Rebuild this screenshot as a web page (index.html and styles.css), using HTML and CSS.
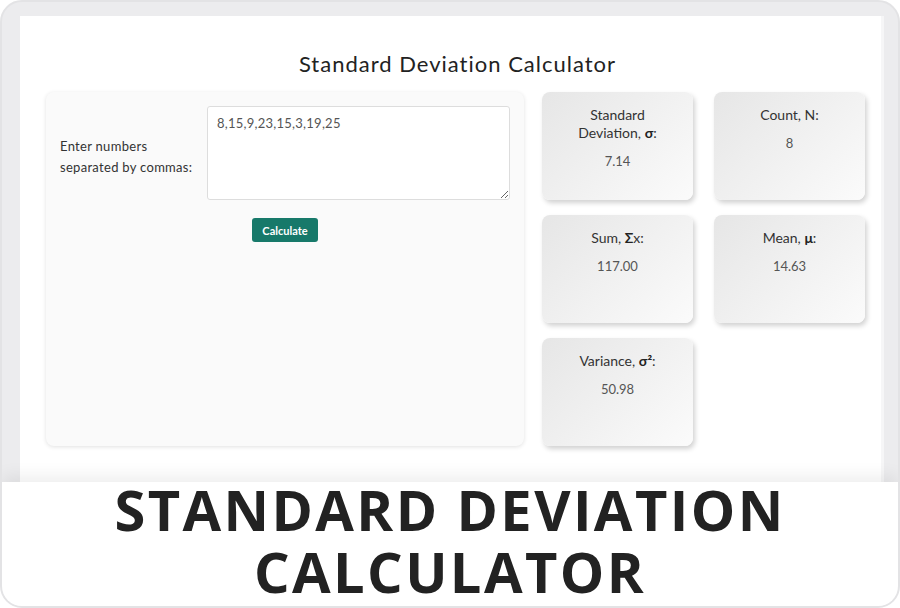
FILE: index.html
```html
<!DOCTYPE html>
<html lang="en">
<head>
    <meta charset="UTF-8">
    <meta name="viewport" content="width=device-width, initial-scale=1.0">
    <title>Standard Deviation Calculator</title>
    <link rel="stylesheet" href="styles.css">
</head>
<body>
    <div class="frame">
        <div class="screen-wrap">
            <div class="screen">
                <h1 class="title">Standard Deviation Calculator</h1>

                <div class="layout">
                    <div class="input-panel">
                        <div class="input-row">
                            <label for="numbers">Enter numbers separated by commas:</label>
                            <textarea id="numbers">8,15,9,23,15,3,19,25</textarea>
                        </div>
                        <div class="actions">
                            <button class="btn-calc" id="calculate">Calculate</button>
                        </div>
                    </div>

                    <div class="results">
                        <div class="card">
                            <div class="card-label">Standard Deviation, <b>σ</b>:</div>
                            <div class="card-value" id="stdDev">7.14</div>
                        </div>
                        <div class="card">
                            <div class="card-label">Count, N:</div>
                            <div class="card-value" id="count">8</div>
                        </div>
                        <div class="card">
                            <div class="card-label">Sum, <b>Σ</b>x:</div>
                            <div class="card-value" id="sum">117.00</div>
                        </div>
                        <div class="card">
                            <div class="card-label">Mean, <b>μ</b>:</div>
                            <div class="card-value" id="mean">14.63</div>
                        </div>
                        <div class="card">
                            <div class="card-label">Variance, <b>σ²</b>:</div>
                            <div class="card-value" id="variance">50.98</div>
                        </div>
                    </div>
                </div>
            </div>
        </div>

        <div class="banner">
            <div class="banner-text">STANDARD DEVIATION CALCULATOR</div>
        </div>
    </div>
</body>
</html>
```

FILE: styles.css
```css
body {
    margin: 0;
    background-color: #fff;
    font-family: Lato, "Open Sans", sans-serif;
}

.frame {
    width: 900px;
    height: 608px;
    box-sizing: border-box;
    border: 2px solid #e3e3e5;
    border-radius: 22px;
    background-color: #ececee;
    overflow: hidden;
    display: flex;
    flex-direction: column;
}

.screen-wrap {
    padding: 14px 14px 0 18px;
    flex: 1;
    display: flex;
}

.screen {
    flex: 1;
    background-color: #fff;
    border-right: 3px solid #f6f6f7;
}

.title {
    margin: 34px 0 14px;
    text-align: center;
    font-size: 22px;
    font-weight: 400;
    line-height: 28px;
    letter-spacing: 1px;
    color: #222;
    padding-left: 14px;
}

.layout {
    display: flex;
    gap: 18px;
    padding-left: 26px;
}

/* input side */
.input-panel {
    width: 478px;
    box-sizing: border-box;
    padding: 14px;
    background-color: #fafafa;
    border-radius: 8px;
    box-shadow: 0 1px 4px rgba(0, 0, 0, 0.12);
}

.input-row {
    display: flex;
    align-items: center;
}

.input-row label {
    width: 147px;
    box-sizing: border-box;
    padding: 8px 10px 0 0;
    font-size: 13px;
    line-height: 21px;
    letter-spacing: 0.3px;
    color: #333;
}

.input-row textarea {
    width: 303px;
    height: 94px;
    box-sizing: border-box;
    padding: 8px 9px;
    border: 1px solid #ddd;
    border-radius: 3px;
    font-family: Lato, "Open Sans", sans-serif;
    font-size: 13px;
    letter-spacing: 0.25px;
    color: #555;
    background-color: #fff;
    resize: vertical;
}

.actions {
    text-align: center;
    margin-top: 18px;
}

.btn-calc {
    padding: 0 10px;
    height: 24px;
    border: none;
    border-radius: 3px;
    background-color: #17796a;
    color: #fff;
    font-family: Lato, sans-serif;
    font-size: 11px;
    font-weight: bold;
    cursor: pointer;
}

/* result cards */
.results {
    display: grid;
    grid-template-columns: repeat(2, 151px);
    grid-auto-rows: 108px;
    column-gap: 21px;
    row-gap: 15px;
}

.card {
    border-radius: 8px;
    background: linear-gradient(135deg, #e6e6e6, #fbfbfb);
    box-shadow: 2px 3px 5px rgba(0, 0, 0, 0.18);
    text-align: center;
    padding: 14px 16px 0;
}

.card-label {
    font-size: 14px;
    line-height: 18px;
    color: #333;
}

.card-label b {
    color: #222;
}

.card-value {
    margin-top: 10px;
    font-size: 13px;
    line-height: 18px;
    color: #555;
}

.banner {
    height: 124px;
    background-color: #fff;
    box-shadow: 0 -6px 16px rgba(0, 0, 0, 0.07);
    z-index: 1;
}

.banner-text {
    padding: 0 90px;
    text-align: center;
    font-family: "Open Sans", sans-serif;
    font-weight: bold;
    font-size: 56px;
    line-height: 62px;
    letter-spacing: 2.4px;
    color: #222;
    transform: translateY(-4px);
}
```
